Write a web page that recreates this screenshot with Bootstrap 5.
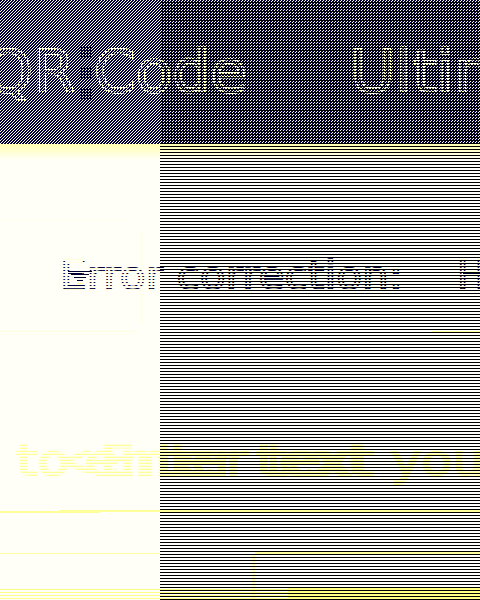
<!DOCTYPE html>
<html lang="en">
<head>
<meta charset="utf-8">
<meta name="viewport" content="width=device-width, initial-scale=1">
<title>QR Code</title>
<link href="https://cdn.jsdelivr.net/npm/bootstrap@5.3.0/dist/css/bootstrap.min.css" rel="stylesheet">
<style>
body{background:#fffff8;width:480px;height:600px;font-family:"DejaVu Sans",sans-serif}
svg{display:block;shape-rendering:crispEdges;font-family:"DejaVu Sans",sans-serif}
.masthead{height:144px}
.content{height:456px}
</style>
</head>
<body class="overflow-hidden m-0 d-flex flex-column">
<header class="masthead w-100 flex-shrink-0">
<svg width="480" height="144" viewBox="0 0 480 144">
<defs>
<pattern id="diag" width="3" height="3" patternUnits="userSpaceOnUse"><rect width="3" height="3" fill="#000040"/><path d="M2 0h1v1h-1zM1 1h1v1h-1zM0 2h1v1h-1z" fill="#ffffe0"/></pattern>
<pattern id="glyph" width="3" height="3" patternUnits="userSpaceOnUse"><path d="M0 0h3v1h-3zM0 2h1v1h-1z" fill="#ffffe8"/><path d="M0 1h1v1h-1z" fill="#ffff90"/></pattern>
<pattern id="rows" width="3" height="3" patternUnits="userSpaceOnUse"><rect y="2" width="3" height="1" fill="#000"/></pattern>
<pattern id="grid" width="3" height="3" patternUnits="userSpaceOnUse"><path d="M0 0h1v3h-1zM0 2h3v1h-3z" fill="#000028"/></pattern>
</defs>
<rect width="480" height="144" fill="url(#diag)"/>
<g fill="none" stroke="url(#glyph)" stroke-width="2.2" font-size="58">
<text x="-16" y="92" textLength="92" lengthAdjust="spacingAndGlyphs">QR</text>
<text x="94" y="92" textLength="153" lengthAdjust="spacingAndGlyphs">Code</text>
<text x="350" y="92" textLength="164" lengthAdjust="spacingAndGlyphs">Ultim</text>
</g>
<path d="M81 46h12v12h-12zM81 67h12v12h-12zM81 88h12v12h-12z" fill="url(#grid)"/>
<rect x="160" width="320" height="144" fill="url(#rows)"/>
</svg>
</header>
<main class="content w-100 flex-shrink-0">
<svg width="480" height="456" viewBox="0 144 480 456">
<defs>
<linearGradient id="fade" x1="0" y1="0" x2="0" y2="1"><stop stop-color="#ffffb0"/><stop offset="1" stop-color="#fffff8"/></linearGradient>
<pattern id="ink" width="3" height="3" patternUnits="userSpaceOnUse"><rect width="3" height="1" fill="#000040"/><rect y="1" width="3" height="1" fill="#ffffd0"/></pattern>
<pattern id="gold" width="3" height="3" patternUnits="userSpaceOnUse"><rect y="1" width="3" height="1" fill="#ffff98"/><rect width="3" height="1" fill="#ffffd8"/></pattern>
</defs>
<rect y="144" width="480" height="16" fill="url(#fade)"/>
<rect x="160" y="160" width="320" height="440" fill="#fffffc"/>
<path d="M0 220h138v1h-138zM0 334h136v1h-136zM140 232h3v93h-3z" fill="#fffff0"/>
<path d="M0 331h138v1h-138z" fill="#ffffe0"/>
<path d="M432 331h48v1h-48z" fill="#ffff99"/>
<g fill="url(#gold)" stroke="url(#gold)" stroke-width="2" font-size="43">
<text x="16" y="475" textLength="54" lengthAdjust="spacingAndGlyphs">to</text>
<text x="58" y="475">&lt;</text>
<text x="84" y="475" textLength="285" lengthAdjust="spacingAndGlyphs">enter text</text>
<text x="100" y="475" textLength="274" lengthAdjust="spacingAndGlyphs">Enter text</text>
<text x="391" y="475" textLength="94" lengthAdjust="spacingAndGlyphs">you</text>
</g>
<path d="M60 510h420v2h-420zM0 511h100v2h-100z" fill="#ffff99"/>
<path d="M0 553h160v1h-160zM255 552h225v2h-225z" fill="#ffffa0"/>
<path d="M252 554h3v46h-3z" fill="#ffffc8"/>
<path d="M0 589h288v1h-288zM0 592h288v1h-288zM0 595h288v1h-288zM0 598h288v1h-288zM288 588h192v12h-192z" fill="#ffff88"/>
<rect x="160" y="144" width="320" height="456" fill="url(#rows)"/>
<g fill="none" stroke="url(#ink)" stroke-width="1.4" font-size="38.5">
<text x="60" y="289" textLength="343" lengthAdjust="spacingAndGlyphs">Error correction:</text>
<text x="457" y="289">H</text>
</g>
<path d="M68 271h24v1h-24zM68 273h14v1h-14zM71 274h18v1h-18zM74 277h12v1h-12zM77 280h6v1h-6zM463 273h17v1h-17z" fill="#000030"/>
<path d="M77 283h6v1h-6z" fill="#ffffa0"/>
</svg>
</main>
<script src="https://cdn.jsdelivr.net/npm/bootstrap@5.3.0/dist/js/bootstrap.bundle.min.js"></script>
</body>
</html>
